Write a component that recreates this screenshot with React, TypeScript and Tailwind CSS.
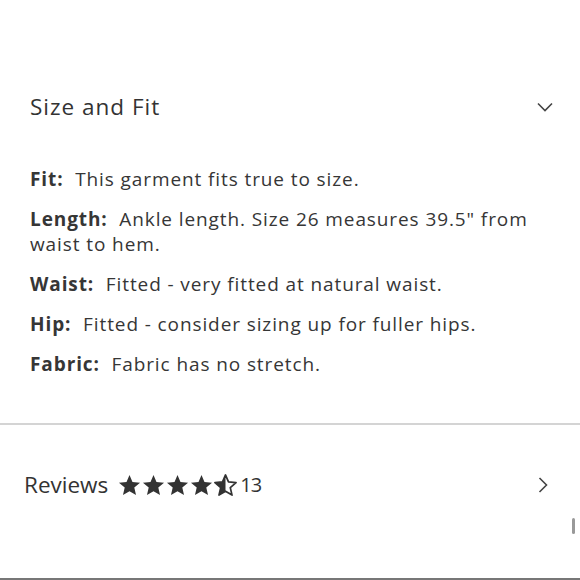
import React from "react";

// Size & fit details shown under the product
const fitDetails: { label: string; text: string }[] = [
  { label: "Fit:", text: "This garment fits true to size." },
  { label: "Length:", text: "Ankle length. Size 26 measures 39.5\" from waist to hem." },
  { label: "Waist:", text: "Fitted - very fitted at natural waist." },
  { label: "Hip:", text: "Fitted - consider sizing up for fuller hips." },
  { label: "Fabric:", text: "Fabric has no stretch." },
];

const starPath =
  "M12 1l3.1 7.3 7.9.7-6 5.2 1.8 7.8-6.8-4.1-6.8 4.1 1.8-7.8-6-5.2 7.9-.7z";

const Star = ({ half = false }: { half?: boolean }) => (
  <svg width="23" height="23" viewBox="0 0 24 24" className="shrink-0">
    <defs>
      <clipPath id="half-left">
        <rect x="0" y="0" width="12" height="24" />
      </clipPath>
    </defs>
    {half ? (
      <>
        <path d={starPath} fill="none" stroke="#333" strokeWidth="1.8" strokeLinejoin="round" />
        <path d={starPath} fill="#333" clipPath="url(#half-left)" />
      </>
    ) : (
      <path d={starPath} fill="#333" />
    )}
  </svg>
);

export default function App() {
  return (
    <div
      className="w-[580px] h-[580px] bg-white text-[#333] flex flex-col overflow-hidden"
      style={{ fontFamily: "'Open Sans', Lato, sans-serif" }}
    >
      {/* Size and Fit section */}
      <div className="pt-[93px] pl-[30px] pr-[26px]">
        <div className="flex items-center justify-between h-[28px]">
          <h2 className="text-[22.5px] leading-[28px] tracking-[1px]">Size and Fit</h2>
          <svg width="18" height="18" viewBox="0 0 18 18">
            <path d="M2 5.5l7 7 7-7" fill="none" stroke="#444" strokeWidth="1.6" />
          </svg>
        </div>
        <div className="mt-[46px] flex flex-col gap-[15px] w-[520px]">
          {fitDetails.map((d) => (
            <p key={d.label} className="text-[19px] leading-[25px] tracking-[0.9px] text-[#363636]">
              <span className="font-bold">{d.label}</span>
              {"\u00a0 "}
              {d.text}
            </p>
          ))}
        </div>
      </div>

      <div className="mt-[46px] h-[2px] bg-[#d4d4d4]" />

      {/* Reviews row */}
      <div className="mt-[46px] pl-[24px] pr-[28px] flex items-center justify-between h-[28px]">
        <div className="flex items-center">
          <span className="text-[22.5px] tracking-[0px] mr-[10px]">Reviews</span>
          <div className="flex items-center gap-[1px]">
            <Star />
            <Star />
            <Star />
            <Star />
            <Star half />
          </div>
          <span className="ml-[3px] text-[20px] tracking-[-0.8px]">13</span>
        </div>
        <svg width="18" height="18" viewBox="0 0 18 18">
          <path d="M5.5 2l7 7-7 7" fill="none" stroke="#444" strokeWidth="1.6" />
        </svg>
      </div>

      <div className="flex-1 relative">
        <div className="absolute right-[5px] top-[19px] w-[3px] h-[16px] rounded-sm bg-[#999]" />
      </div>
      <div className="h-[2px] bg-[#777]" />
    </div>
  );
}
